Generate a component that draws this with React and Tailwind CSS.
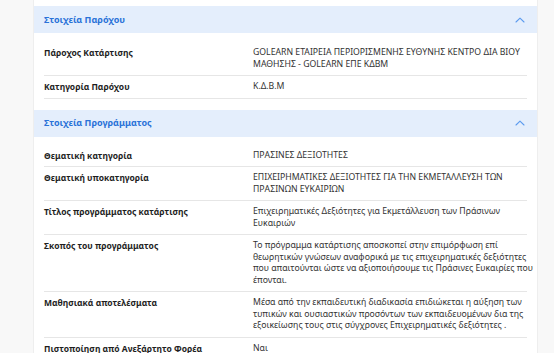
import React from "react";

const ChevronUp = () => (
  <svg width="10" height="6" viewBox="0 0 10 6" fill="none">
    <path d="M1 5L5 1.2L9 5" stroke="#5b9bef" strokeWidth="1.1" strokeLinecap="round" strokeLinejoin="round" />
  </svg>
);

const Row = ({ label, lines, last }) => (
  <div className={"flex pt-[5px] pb-[5px] " + (last ? "" : "border-b border-[#e6e6e6]")}>
    <div className="w-[209px] shrink-0 font-bold text-[#1e1e1e] leading-[11.5px]">{label}</div>
    <div className="text-[#333] text-[8.7px] leading-[11.5px]">
      {lines.map((l, i) => (
        <div key={i} className="whitespace-nowrap">
          {l}
        </div>
      ))}
    </div>
  </div>
);

const Section = ({ title, children, pt }) => (
  <div>
    <div className="h-[27px] bg-[#e4eefc] flex items-center justify-between pl-[10px] pr-[12px]">
      <span className="font-bold text-[#2a72d8] text-[9px]">{title}</span>
      <ChevronUp />
    </div>
    <div className={"mx-[10px] " + pt}>{children}</div>
  </div>
);

export default function App() {
  return (
    <div
      className="w-[554px] h-[353px] overflow-hidden bg-[#f8f8f8] text-[8.5px]"
      style={{ fontFamily: '"Noto Sans", "Open Sans", sans-serif' }}
    >
      <div className="ml-[33px] w-[505px] h-full bg-white border-x border-[#eeeeee] pt-[6px]">
        <Section title="Στοιχεία Παρόχου" pt="pt-[9px]">
          <Row
            label="Πάροχος Κατάρτισης"
            lines={[
              "GOLEARN ΕΤΑΙΡΕΙΑ ΠΕΡΙΟΡΙΣΜΕΝΗΣ ΕΥΘΥΝΗΣ ΚΕΝΤΡΟ ΔΙΑ ΒΙΟΥ",
              "ΜΑΘΗΣΗΣ - GOLEARN ΕΠΕ ΚΔΒΜ",
            ]}
          />
          <Row label="Κατηγορία Παρόχου" lines={["Κ.Δ.Β.Μ"]} />
        </Section>
        <div className="h-[11px]" />
        <Section title="Στοιχεία Προγράμματος" pt="pt-[8px]">
          <Row label="Θεματική κατηγορία" lines={["ΠΡΑΣΙΝΕΣ ΔΕΞΙΟΤΗΤΕΣ"]} />
          <Row
            label="Θεματική υποκατηγορία"
            lines={["ΕΠΙΧΕΙΡΗΜΑΤΙΚΕΣ ΔΕΞΙΟΤΗΤΕΣ ΓΙΑ ΤΗΝ ΕΚΜΕΤΑΛΛΕΥΣΗ ΤΩΝ", "ΠΡΑΣΙΝΩΝ ΕΥΚΑΙΡΙΩΝ"]}
          />
          <Row
            label="Τίτλος προγράμματος κατάρτισης"
            lines={["Επιχειρηματικές Δεξιότητες για Εκμετάλλευση των Πράσινων", "Ευκαιριών"]}
          />
          <Row
            label="Σκοπός του προγράμματος"
            lines={[
              "Το πρόγραμμα κατάρτισης αποσκοπεί στην επιμόρφωση επί",
              "θεωρητικών γνώσεων αναφορικά με τις επιχειρηματικές δεξιότητες",
              "που απαιτούνται ώστε να αξιοποιήσουμε τις Πράσινες  Ευκαιρίες που",
              "έπονται.",
            ]}
          />
          <Row
            label="Μαθησιακά αποτελέσματα"
            lines={[
              "Μέσα από την εκπαιδευτική διαδικασία επιδιώκεται η αύξηση των",
              "τυπικών και ουσιαστικών προσόντων των εκπαιδευομένων δια της",
              "εξοικείωσης τους στις σύγχρονες Επιχειρηματικές δεξιότητες .",
            ]}
          />
          <Row label="Πιστοποίηση από Ανεξάρτητο Φορέα" lines={["Ναι"]} last />
        </Section>
      </div>
    </div>
  );
}
